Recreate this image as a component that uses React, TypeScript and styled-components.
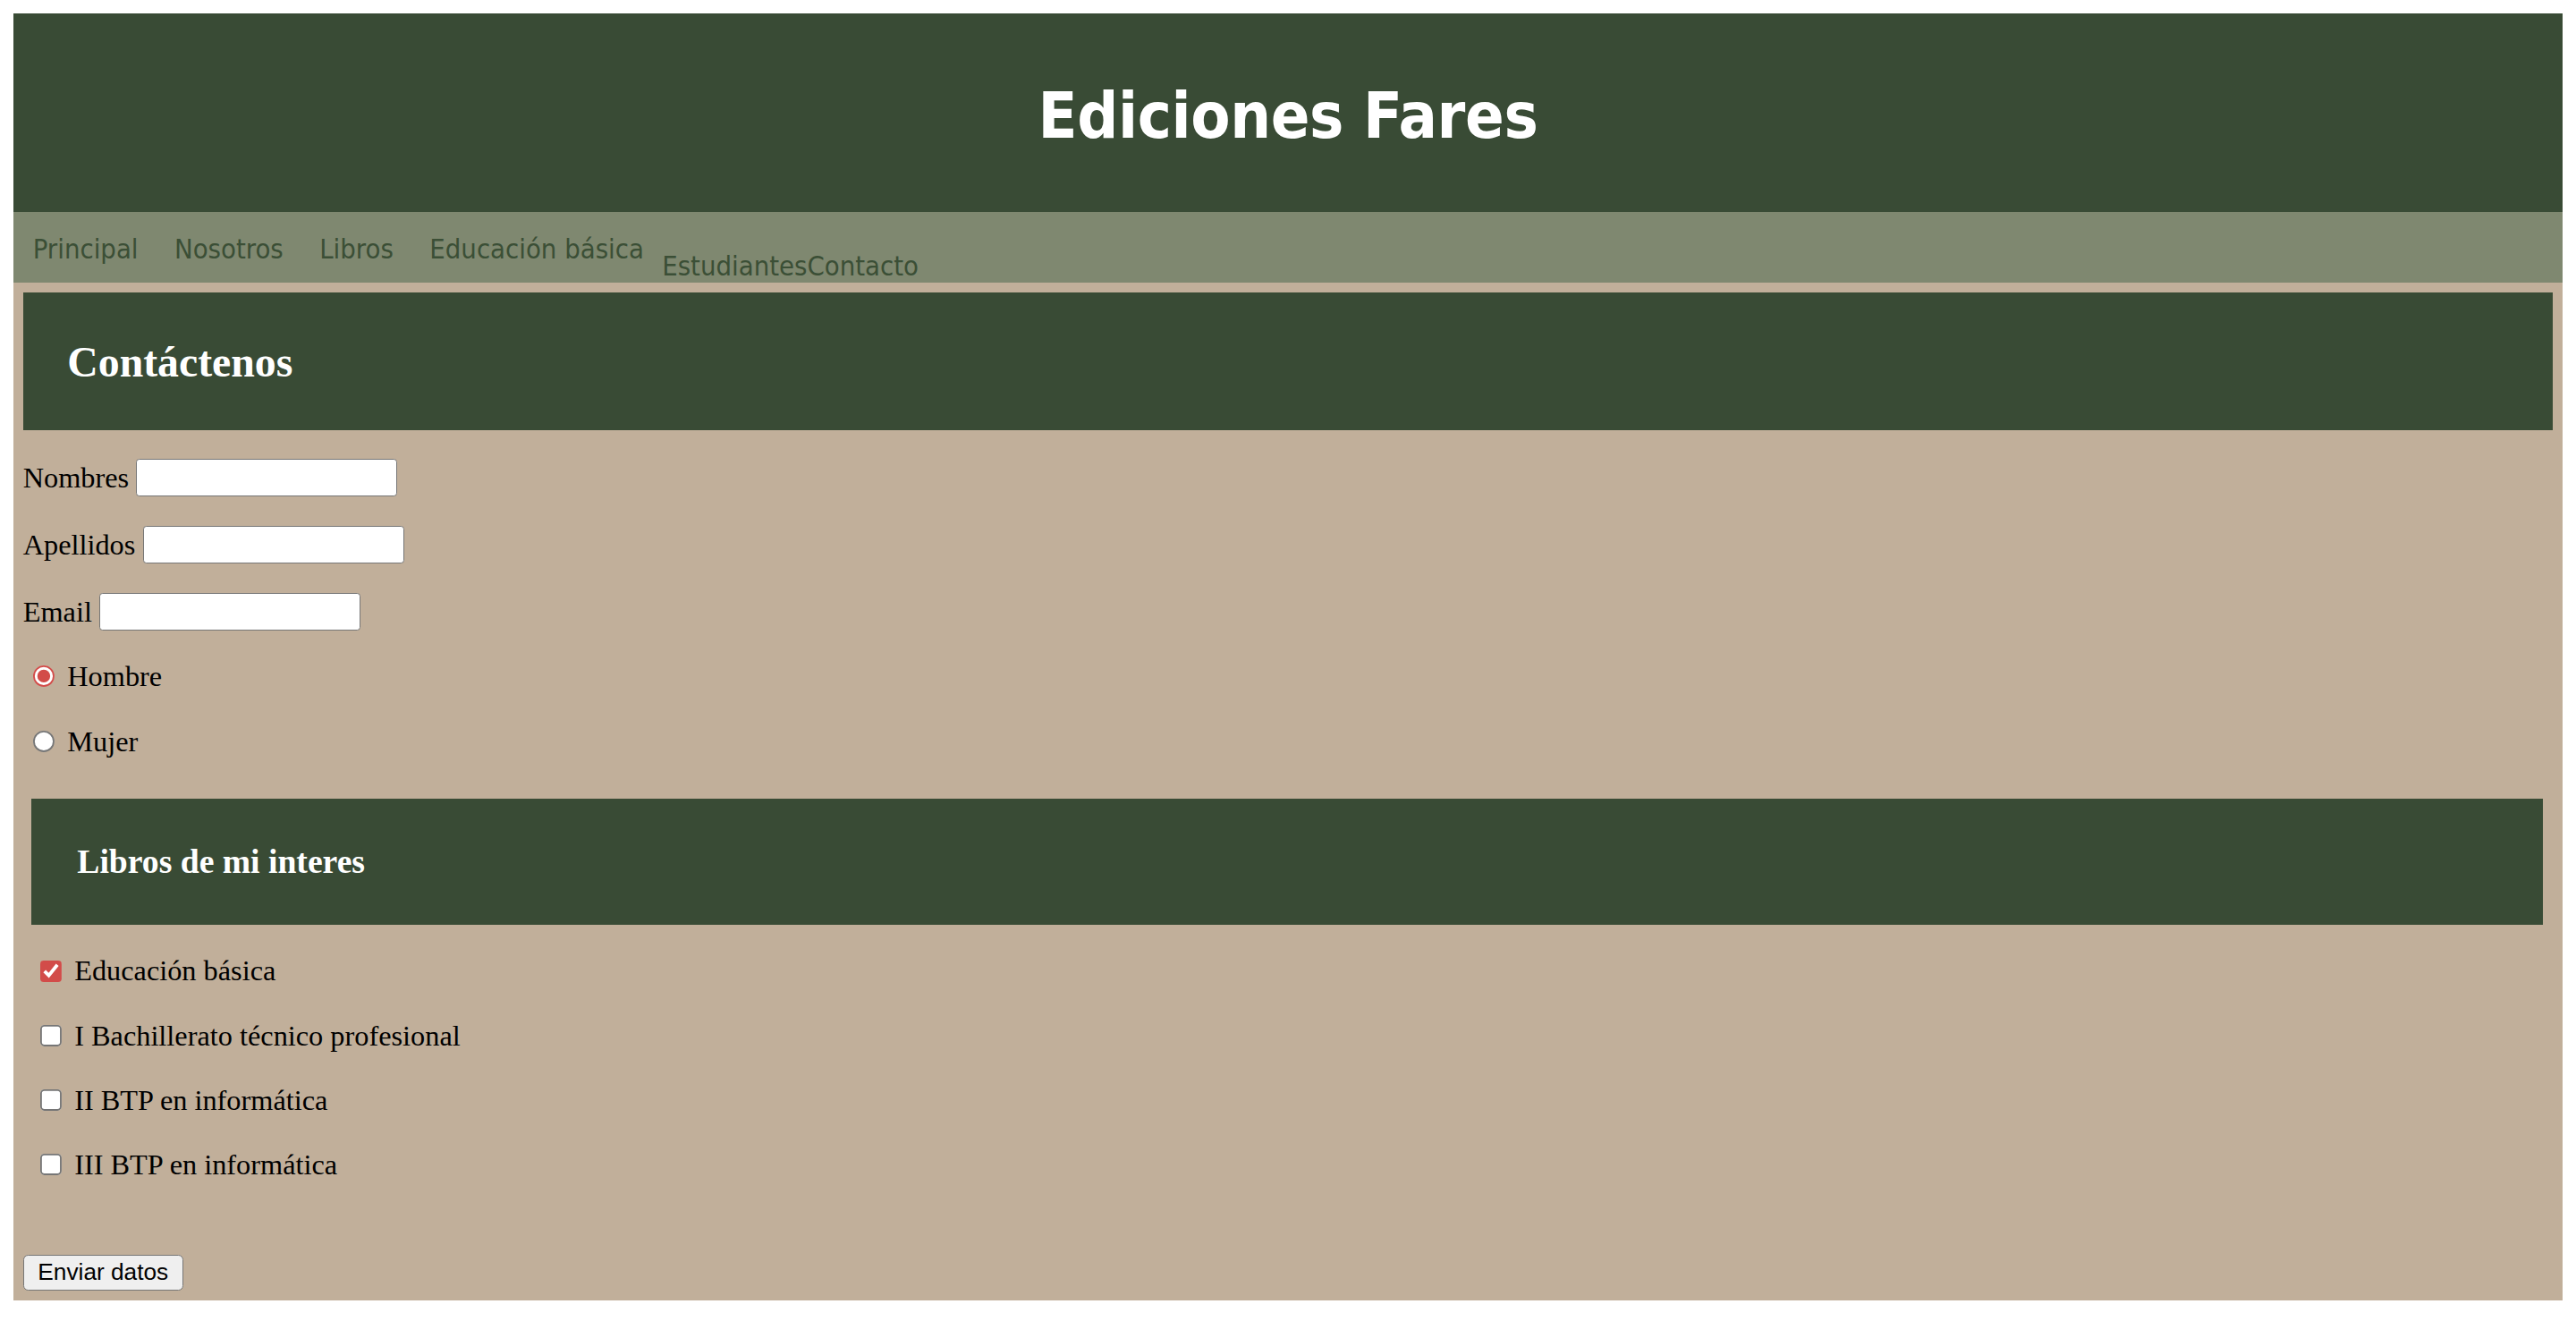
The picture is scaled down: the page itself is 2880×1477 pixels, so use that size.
import React from "react";
import styled, { createGlobalStyle } from "styled-components";

const GlobalStyle = createGlobalStyle`
  html {
    zoom: 1.8367;
  }
  body {
    margin: 8px;
    background: #ffffff;
    font-family: "Liberation Serif", "Times New Roman", serif;
    font-size: 17.6px;
    color: #000000;
  }
`;

const DARK = "#394b35";
const TAN = "#c1af9a";
const SAGE = "#7f8870";
const ACCENT = "#d24c49";

const Page = styled.div`
  display: flex;
  flex-direction: column;
`;

const Header = styled.header`
  height: 121px;
  box-sizing: border-box;
  padding-top: 4px;
  background: ${DARK};
  display: flex;
  align-items: center;
  justify-content: center;
`;

const Title = styled.h1`
  margin: 0;
  color: #ffffff;
  font-family: "DejaVu Sans Condensed", "DejaVu Sans", sans-serif;
  font-weight: bold;
  font-size: 39px;
  letter-spacing: -0.2px;
`;

const Nav = styled.nav`
  height: 43px;
  background: ${SAGE};
  display: flex;
  align-items: flex-start;
  padding: 0 1px;
  box-sizing: border-box;
  font-family: "DejaVu Sans Condensed", "DejaVu Sans", sans-serif;
  font-size: 16.75px;
`;

const NavLink = styled.a<{ $tight?: boolean; $low?: boolean }>`
  color: #3b4f36;
  text-decoration: none;
  padding: 0 ${(p) => (p.$tight ? 0 : 11)}px;
  margin-top: ${(p) => (p.$low ? 23 : 12.5)}px;
  line-height: 20px;
  white-space: nowrap;
`;

const Section = styled.section`
  background: ${TAN};
  padding: 6px;
  display: flex;
  flex-direction: column;
  align-items: flex-start;
`;

const Banner = styled.div<{ $left?: number; $right?: number; $top?: number; $height: number; $pad: number }>`
  align-self: stretch;
  margin: ${(p) => p.$top ?? 0}px ${(p) => p.$right ?? 0}px 0 ${(p) => p.$left ?? 0}px;
  height: ${(p) => p.$height}px;
  background: ${DARK};
  display: flex;
  align-items: center;
  padding-left: ${(p) => p.$pad}px;
`;

const BannerTitle = styled.h2<{ $size: number }>`
  margin: 0;
  color: #ffffff;
  font-family: "Liberation Serif", "Times New Roman", serif;
  font-weight: bold;
  font-size: ${(p) => p.$size}px;
`;

const FieldRow = styled.label<{ $top: number; $height: number }>`
  display: flex;
  align-items: center;
  height: ${(p) => p.$height}px;
  margin-top: ${(p) => p.$top}px;
  white-space: nowrap;
`;

const TextInput = styled.input`
  box-sizing: border-box;
  width: 159px;
  height: 22.5px;
  margin-left: 4.5px;
  border: 1px solid #767676;
  border-radius: 2px;
  background: #ffffff;
  padding: 1px 2px;
  font-family: "Liberation Sans", Arial, sans-serif;
  font-size: 13.3px;
`;

const Choice = styled.input<{ $left: number }>`
  width: 13.5px;
  height: 13.5px;
  margin: 0 7.5px 0 ${(p) => p.$left}px;
  accent-color: ${ACCENT};
`;

const SubmitButton = styled.button`
  margin-top: 43.5px;
  height: 22px;
  box-sizing: border-box;
  padding: 0 8.5px;
  border: 1px solid #767676;
  border-radius: 3px;
  background: #efefef;
  color: #000000;
  font-family: "Liberation Sans", Arial, sans-serif;
  font-size: 14.3px;
`;

const books = [
  { label: "Educación básica", checked: true },
  { label: "I Bachillerato técnico profesional", checked: false },
  { label: "II BTP en informática", checked: false },
  { label: "III BTP en informática", checked: false },
];

export default function App() {
  return (
    <>
      <GlobalStyle />
      <Page>
        <Header>
          <Title>Ediciones Fares</Title>
        </Header>
        <Nav>
          <NavLink href="#">Principal</NavLink>
          <NavLink href="#">Nosotros</NavLink>
          <NavLink href="#">Libros</NavLink>
          <NavLink href="#">Educación básica</NavLink>
          <NavLink href="#" $tight $low>
            Estudiantes
          </NavLink>
          <NavLink href="#" $tight $low>
            Contacto
          </NavLink>
        </Nav>
        <Section>
          <Banner $height={84} $pad={27}>
            <BannerTitle $size={26}>Contáctenos</BannerTitle>
          </Banner>
          <FieldRow $top={16.8} $height={24}>
            Nombres
            <TextInput type="text" />
          </FieldRow>
          <FieldRow $top={16.85} $height={24}>
            Apellidos
            <TextInput type="text" />
          </FieldRow>
          <FieldRow $top={16.85} $height={24}>
            Email
            <TextInput type="email" />
          </FieldRow>
          <FieldRow $top={16.5} $height={22}>
            <Choice $left={6} type="radio" name="sexo" defaultChecked />
            Hombre
          </FieldRow>
          <FieldRow $top={17.5} $height={22}>
            <Choice $left={6} type="radio" name="sexo" />
            Mujer
          </FieldRow>
          <Banner $left={5} $right={6} $top={23.5} $height={77} $pad={28}>
            <BannerTitle $size={20.5}>Libros de mi interes</BannerTitle>
          </Banner>
          {books.map((b) => (
            <FieldRow key={b.label} $top={17.3} $height={22}>
              <Choice $left={10.3} type="checkbox" defaultChecked={b.checked} />
              {b.label}
            </FieldRow>
          ))}
          <SubmitButton type="submit">Enviar datos</SubmitButton>
        </Section>
      </Page>
    </>
  );
}
